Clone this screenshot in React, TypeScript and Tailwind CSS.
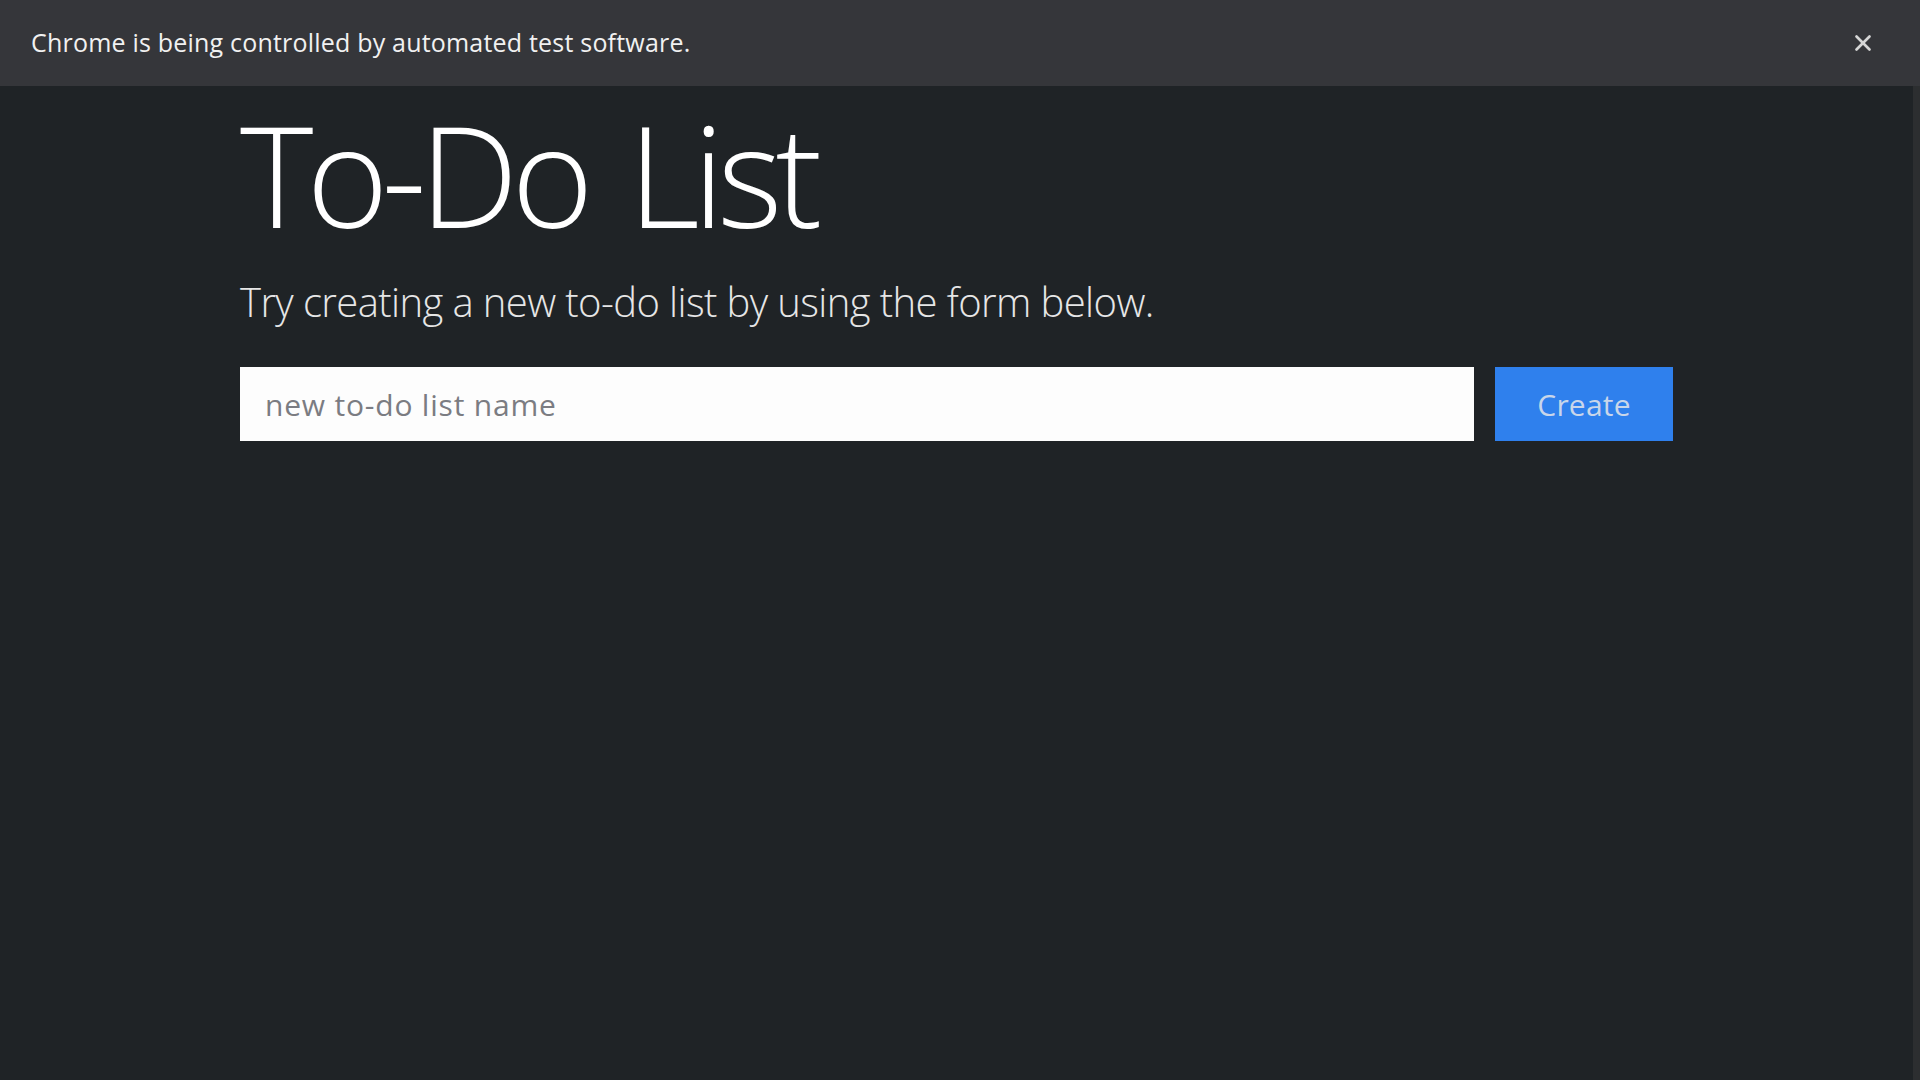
import { useState } from "react";
import { X } from "lucide-react";

export default function App() {
  const [name, setName] = useState("");

  return (
    <div className="w-[1920px] h-[1080px] flex flex-col bg-[#1f2326] font-['Open_Sans',sans-serif] overflow-hidden">
      {/* automation infobar */}
      <div className="h-[86px] shrink-0 flex items-center justify-between bg-[#35363a] pl-[31px] pr-[44px]">
        <span className="text-[25px] text-[#f1f1f1] tracking-[0.2px]">
          Chrome is being controlled by automated test software.
        </span>
        <X size={26} strokeWidth={2.5} className="text-[#d6d6d6]" />
      </div>

      <div className="flex flex-1">
        <main className="flex-1">
          <div className="w-[1433px] mx-auto pt-[8px]">
            <h1 className="text-[140px] font-light leading-[160px] text-white tracking-[-7px] [word-spacing:12px]">
              To-Do List
            </h1>
            <p className="mt-[24px] text-[40px] font-light leading-[48px] text-[#e6e6e6] tracking-[-0.6px]">
              Try creating a new to-do list by using the form below.
            </p>

            <form
              className="flex gap-[21px] mt-[41px]"
              onSubmit={(e) => e.preventDefault()}>
              <input
                type="text"
                value={name}
                onChange={(e) => setName(e.target.value)}
                placeholder="new to-do list name"
                className="flex-1 h-[74px] bg-[#fdfdfd] px-[25px] text-[30px] text-gray-900 placeholder-[#7b7c82] tracking-[0.8px] outline-none"
              />
              <button
                type="submit"
                className="w-[178px] h-[74px] bg-[#2f80ed] text-[30px] text-[#c9d6ea] tracking-[0.2px]">
                Create
              </button>
            </form>
          </div>
        </main>
        <div className="w-[7px] bg-[#2c2e30]" />
      </div>
    </div>
  );
}
